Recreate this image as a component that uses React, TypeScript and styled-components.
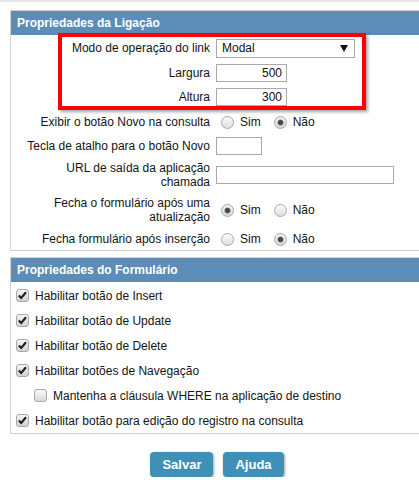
import React from "react";
import styled, { createGlobalStyle } from "styled-components";

const GlobalStyle = createGlobalStyle`
  html, body { margin: 0; padding: 0; background: #fff; overflow: hidden; }
  body {
    font-family: "Liberation Sans", Arial, sans-serif;
    font-size: 12px;
    color: #141414;
  }
  * { box-sizing: border-box; }
`;

const TopStrip = styled.div`
  height: 2px;
  background: #e6e6e6;
`;

const Page = styled.div`
  position: relative;
  width: 414px;
  margin: 8px 0 0 10px;
`;

const Panel = styled.section<{ $mt?: number }>`
  border: 1px solid #d2d2d2;
  margin-top: ${(p) => p.$mt ?? 0}px;
`;

const PanelHeader = styled.h2`
  margin: 0;
  height: 24px;
  display: flex;
  align-items: center;
  padding-left: 6px;
  background: #5b8db8;
  color: #fff;
  font-size: 12px;
  font-weight: bold;
`;

const FieldRow = styled.div<{ $h: number }>`
  display: grid;
  grid-template-columns: 199px 1fr;
  height: ${(p) => p.$h}px;
  align-items: center;
`;

const FieldLabel = styled.div`
  text-align: right;
  padding-left: 12px;
  line-height: 14px;
`;

const FieldControl = styled.div`
  padding-left: 6px;
  display: flex;
  align-items: center;
`;

const SelectWrap = styled.div`
  position: relative;
  width: 139px;
  height: 19px;
`;

const Select = styled.select`
  appearance: none;
  -webkit-appearance: none;
  width: 100%;
  height: 100%;
  border: 1px solid #a9a9a9;
  border-radius: 0;
  background: #fff;
  padding: 0 0 0 5px;
  font-family: "Liberation Sans", Arial, sans-serif;
  font-size: 12px;
  color: #111;
  outline: none;
`;

const SelectArrow = styled.svg`
  position: absolute;
  right: 7px;
  top: 6px;
  pointer-events: none;
`;

const TextInput = styled.input<{ $w: number; $right?: boolean }>`
  width: ${(p) => p.$w}px;
  height: 18px;
  border: 1px solid #a9a9a9;
  padding: 0 4px;
  font-family: "Liberation Sans", Arial, sans-serif;
  font-size: 12px;
  color: #111;
  text-align: ${(p) => (p.$right ? "right" : "left")};
  outline: none;
`;

const RadioGroup = styled.div`
  display: flex;
  align-items: center;
  gap: 8px;
`;

const Option = styled.label`
  display: inline-flex;
  align-items: center;
  gap: 6px;
`;

const Radio = styled.input.attrs({ type: "radio" })`
  appearance: none;
  -webkit-appearance: none;
  margin: 1px 0 0 5px;
  width: 13px;
  height: 13px;
  border-radius: 50%;
  border: 1px solid #a8a8a8;
  background: linear-gradient(#fbfbfb, #dedede);
  &:checked {
    background: radial-gradient(circle at 50% 50%, #4a4a4a 0 2.2px, rgba(74,74,74,0.5) 2.8px, transparent 3.4px),
      linear-gradient(#f4f4f4, #d6d6d6);
  }
`;

const checkSvg =
  "data:image/svg+xml," +
  encodeURIComponent(
    '<svg xmlns="http://www.w3.org/2000/svg" width="13" height="13" viewBox="0 0 13 13"><path d="M2.8 6.4 L5.2 8.9 L10 3.2" fill="none" stroke="#1f1f1f" stroke-width="2.1"/></svg>'
  );

const Check = styled.input.attrs({ type: "checkbox" })`
  appearance: none;
  -webkit-appearance: none;
  margin: 0;
  width: 13px;
  height: 13px;
  border-radius: 3px;
  border: 1px solid #a8a8a8;
  background: linear-gradient(#fbfbfb, #d8d8d8);
  &:checked {
    background: url("${checkSvg}") center / 13px 13px no-repeat, linear-gradient(#f4f4f4, #d2d2d2);
  }
`;

const CheckList = styled.div`
  padding-top: 1px;
`;

const CheckRow = styled.label<{ $indent?: boolean }>`
  height: 25px;
  display: flex;
  align-items: center;
  gap: 6px;
  padding-left: ${(p) => (p.$indent ? 23 : 5)}px;
`;

const ButtonBar = styled.div`
  display: flex;
  justify-content: center;
  gap: 10px;
  margin-top: 18px;
`;

const Button = styled.button`
  height: 25px;
  padding: 0 12px 1px;
  border: none;
  border-radius: 4px;
  background: #3f8fb6;
  color: #fff;
  font-family: "Liberation Sans", Arial, sans-serif;
  font-size: 13px;
  font-weight: bold;
  box-shadow: 1px 1px 3px rgba(0, 0, 0, 0.35);
  cursor: pointer;
`;

const Highlight = styled.div`
  position: absolute;
  left: 48px;
  top: 23px;
  width: 308px;
  height: 77px;
  border: 4px solid #ff0000;
  box-shadow: 2px 2px 3px rgba(0, 0, 0, 0.35);
  pointer-events: none;
`;

export default function App() {
  return (
    <>
      <GlobalStyle />
      <TopStrip />
      <Page>
        <Panel>
          <PanelHeader>Propriedades da Ligação</PanelHeader>
          <FieldRow $h={26}>
            <FieldLabel>Modo de operação do link</FieldLabel>
            <FieldControl>
              <SelectWrap>
                <Select defaultValue="modal">
                  <option value="modal">Modal</option>
                  <option value="nova">Nova janela</option>
                </Select>
                <SelectArrow width="8" height="7" viewBox="0 0 8 7">
                  <path d="M0 0 H8 L4 7 Z" fill="#111" />
                </SelectArrow>
              </SelectWrap>
            </FieldControl>
          </FieldRow>
          <FieldRow $h={24}>
            <FieldLabel>Largura</FieldLabel>
            <FieldControl>
              <TextInput $w={71} $right defaultValue="500" />
            </FieldControl>
          </FieldRow>
          <FieldRow $h={24}>
            <FieldLabel>Altura</FieldLabel>
            <FieldControl>
              <TextInput $w={71} $right defaultValue="300" />
            </FieldControl>
          </FieldRow>
          <FieldRow $h={25}>
            <FieldLabel>Exibir o botão Novo na consulta</FieldLabel>
            <FieldControl>
              <RadioGroup>
                <Option>
                  <Radio name="novo" />
                  Sim
                </Option>
                <Option>
                  <Radio name="novo" defaultChecked />
                  Não
                </Option>
              </RadioGroup>
            </FieldControl>
          </FieldRow>
          <FieldRow $h={23}>
            <FieldLabel>Tecla de atalho para o botão Novo</FieldLabel>
            <FieldControl>
              <TextInput $w={46} />
            </FieldControl>
          </FieldRow>
          <FieldRow $h={35}>
            <FieldLabel>URL de saída da aplicação chamada</FieldLabel>
            <FieldControl>
              <TextInput $w={178} />
            </FieldControl>
          </FieldRow>
          <FieldRow $h={36}>
            <FieldLabel>Fecha o formulário após uma atualização</FieldLabel>
            <FieldControl>
              <RadioGroup>
                <Option>
                  <Radio name="upd" defaultChecked />
                  Sim
                </Option>
                <Option>
                  <Radio name="upd" />
                  Não
                </Option>
              </RadioGroup>
            </FieldControl>
          </FieldRow>
          <FieldRow $h={22}>
            <FieldLabel>Fecha formulário após inserção</FieldLabel>
            <FieldControl>
              <RadioGroup>
                <Option>
                  <Radio name="ins" />
                  Sim
                </Option>
                <Option>
                  <Radio name="ins" defaultChecked />
                  Não
                </Option>
              </RadioGroup>
            </FieldControl>
          </FieldRow>
        </Panel>

        <Panel $mt={6}>
          <PanelHeader>Propriedades do Formulário</PanelHeader>
          <CheckList>
            <CheckRow>
              <Check defaultChecked />
              Habilitar botão de Insert
            </CheckRow>
            <CheckRow>
              <Check defaultChecked />
              Habilitar botão de Update
            </CheckRow>
            <CheckRow>
              <Check defaultChecked />
              Habilitar botão de Delete
            </CheckRow>
            <CheckRow>
              <Check defaultChecked />
              Habilitar botões de Navegação
            </CheckRow>
            <CheckRow $indent>
              <Check />
              Mantenha a cláusula WHERE na aplicação de destino
            </CheckRow>
            <CheckRow>
              <Check defaultChecked />
              Habilitar botão para edição do registro na consulta
            </CheckRow>
          </CheckList>
        </Panel>

        <ButtonBar>
          <Button type="button">Salvar</Button>
          <Button type="button">Ajuda</Button>
        </ButtonBar>

        <Highlight />
      </Page>
    </>
  );
}
